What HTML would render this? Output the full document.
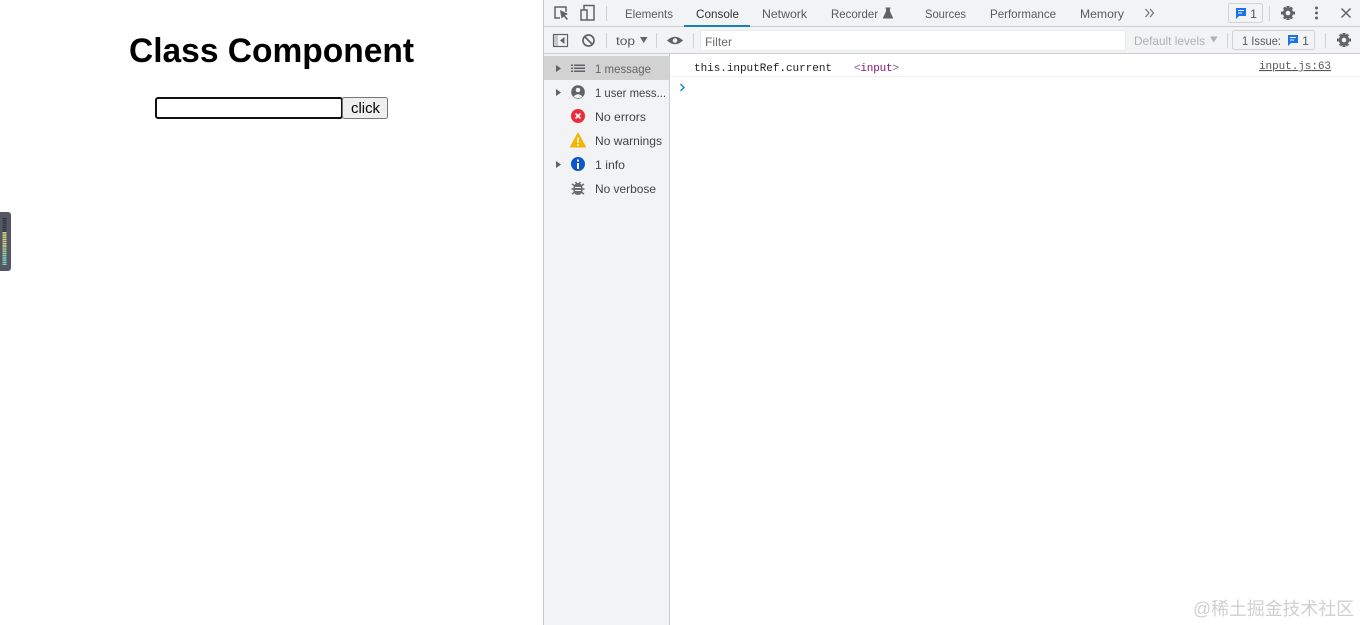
<!DOCTYPE html>
<html><head><meta charset="utf-8"><style>
html,body{margin:0;padding:0;background:#fff;width:1360px;height:625px;overflow:hidden}
svg{display:block}
text{font-family:"Liberation Sans","Noto Sans CJK SC",sans-serif;font-size:12px;fill:#5a5a5a}
.m{font-family:"Liberation Mono",monospace;font-size:11px}
</style></head><body>
<svg width="1360" height="625" viewBox="0 0 1360 625" xmlns="http://www.w3.org/2000/svg">
<!-- page -->
<text x="129" y="62" textLength="285" lengthAdjust="spacingAndGlyphs" style="font-size:34px;font-weight:bold;fill:#000">Class Component</text>
<rect x="156" y="98" width="186" height="20" rx="2" fill="#fff" stroke="#101010" stroke-width="2"/>
<rect x="342.500" y="97.500" width="45" height="21" rx="2" fill="#efefef" stroke="#767676"/>
<text x="351" y="113" textLength="29" lengthAdjust="spacingAndGlyphs" style="font-size:15px;fill:#000">click</text>
<!-- side widget -->
<rect x="-4" y="212" width="15" height="59" rx="3" fill="#555766"/>
<path d="M4.500 218V232" stroke="#2c2d34" stroke-width="4" stroke-dasharray="1.200 1"/>
<path d="M4.500 232V246" stroke="#d6d87a" stroke-width="4" stroke-dasharray="1.500 .7"/>
<path d="M4.500 246V255" stroke="#a8d48c" stroke-width="4" stroke-dasharray="1.500 .7"/>
<path d="M4.500 255V265" stroke="#79d6b4" stroke-width="4" stroke-dasharray="1.500 .7"/>
<!-- devtools -->
<rect x="543" y="0" width="817" height="625" fill="#fff"/>
<rect x="543" y="0" width="1" height="625" fill="#c8c8c8"/>
<rect x="544" y="0" width="816" height="53" fill="#f1f3f4"/>
<rect x="544" y="26" width="816" height="1" fill="#cbcdd0"/>
<rect x="544" y="53" width="816" height="1" fill="#cbcdd0"/>
<rect x="544" y="54" width="125" height="571" fill="#f1f3f4"/>
<rect x="669" y="54" width="1" height="571" fill="#cbcdd0"/>
<rect x="544" y="56" width="125" height="24" fill="#d2d2d2"/>
<rect x="670" y="76" width="690" height="1" fill="#f0f0f0"/>
<!-- tab bar icons -->
<g fill="none" stroke="#5f6368" stroke-width="1.500">
<path d="M560 18H555V7H566V12"/>
<rect x="581" y="10" width="6" height="10"/>
<path d="M584 10V5.500H594V20H587"/>
</g>
<path d="M560 10L568 14L565 15.500L568 19L566.500 20L564 16.500L561.500 18.500Z" fill="#5f6368"/>
<rect x="606" y="6" width="1" height="15" fill="#cfd1d4"/>
<text x="625" y="18" textLength="48" lengthAdjust="spacingAndGlyphs">Elements</text>
<text x="696" y="18" textLength="43" lengthAdjust="spacingAndGlyphs" style="fill:#333">Console</text>
<rect x="684" y="25" width="66" height="2" fill="#1a7fb8"/>
<text x="762" y="18" textLength="45" lengthAdjust="spacingAndGlyphs">Network</text>
<text x="831" y="18" textLength="47" lengthAdjust="spacingAndGlyphs">Recorder</text>
<path d="M885.500 8H890.500M886.500 8V11.500L883.500 18H892.500L889.500 11.500V8Z" fill="#5f6368" stroke="#5f6368"/>
<text x="925" y="18" textLength="41" lengthAdjust="spacingAndGlyphs">Sources</text>
<text x="990" y="18" textLength="66" lengthAdjust="spacingAndGlyphs">Performance</text>
<text x="1080" y="18" textLength="44" lengthAdjust="spacingAndGlyphs">Memory</text>
<path d="M1145.500 9L1149 13L1145.500 17M1150 9L1153.500 13L1150 17" fill="none" stroke="#6e7276" stroke-width="1.200"/>
<rect x="1228.500" y="3.500" width="34" height="19" rx="2" fill="#f1f3f4" stroke="#cfd1d4"/>
<path d="M1236 8H1246V16H1239L1236 19Z" fill="#1a73e8"/>
<path d="M1238 10.500H1244M1238 13H1242" stroke="#fff"/>
<text x="1250" y="18" textLength="7" lengthAdjust="spacingAndGlyphs">1</text>
<rect x="1269" y="6" width="1" height="15" fill="#cfd1d4"/>
<!-- gear 1 -->
<g fill="#5f6368">
<circle cx="1288" cy="13" r="5.200"/>
<path d="M1286.500 6H1289.500V20H1286.500ZM1281 11.500H1295V14.500H1281ZM1283 8.200L1285.200 6.500L1293 17.800L1290.800 19.500ZM1293 8.200L1290.800 6.500L1283 17.800L1285.200 19.500Z"/>
<circle cx="1316.500" cy="8" r="1.500"/><circle cx="1316.500" cy="13" r="1.500"/><circle cx="1316.500" cy="18" r="1.500"/>
</g>
<circle cx="1288" cy="13" r="2.300" fill="#f1f3f4"/>
<path d="M1341.500 8.500L1350.500 17.500M1350.500 8.500L1341.500 17.500" stroke="#5f6368" stroke-width="1.500"/>
<!-- second toolbar -->
<rect x="553.500" y="34.500" width="14" height="12" fill="none" stroke="#5f6368" stroke-width="1.200"/>
<rect x="554" y="35" width="4" height="11" fill="#c4c7ca"/>
<path d="M564.500 37V44L560 40.500Z" fill="#5f6368"/>
<circle cx="588.500" cy="40.500" r="5.500" fill="none" stroke="#5f6368" stroke-width="1.700"/>
<path d="M584.500 36.500L592.500 44.500" stroke="#5f6368" stroke-width="1.700"/>
<rect x="606" y="33" width="1" height="15" fill="#cfd1d4"/>
<text x="616" y="45" textLength="19" lengthAdjust="spacingAndGlyphs">top</text>
<path d="M640 37H647.500L643.750 43Z" fill="#5f6368"/>
<rect x="656" y="33" width="1" height="15" fill="#cfd1d4"/>
<path d="M667 40.500Q675 33 683 40.500Q675 48 667 40.500Z" fill="#5f6368"/>
<circle cx="675" cy="40.500" r="2.300" fill="#f1f3f4"/>
<rect x="693" y="33" width="1" height="15" fill="#cfd1d4"/>
<rect x="700.500" y="30.500" width="425" height="20" rx="1" fill="#fff" stroke="#e8eaed"/>
<text x="705" y="46" textLength="27" lengthAdjust="spacingAndGlyphs" style="fill:#6a6a6a">Filter</text>
<text x="1134" y="45" textLength="71" lengthAdjust="spacingAndGlyphs" style="fill:#aeb0b3">Default levels</text>
<path d="M1210 36.500H1217.500L1213.750 42.500Z" fill="#aeb0b3"/>
<rect x="1227" y="33" width="1" height="15" fill="#cfd1d4"/>
<rect x="1232.500" y="30.500" width="82" height="19" rx="2" fill="#f1f3f4" stroke="#cfd1d4"/>
<text x="1242" y="45" textLength="39" lengthAdjust="spacingAndGlyphs">1 Issue:</text>
<path d="M1288 35H1298V43H1291L1288 46Z" fill="#1a73e8"/>
<path d="M1290 37.500H1296M1290 40H1294" stroke="#fff"/>
<text x="1302" y="45" textLength="7" lengthAdjust="spacingAndGlyphs">1</text>
<rect x="1325" y="33" width="1" height="15" fill="#cfd1d4"/>
<g fill="#5f6368">
<circle cx="1344" cy="40" r="5.200"/>
<path d="M1342.500 33H1345.500V47H1342.500ZM1337 38.500H1351V41.500H1337ZM1339 35.200L1341.200 33.500L1349 44.800L1346.800 46.500ZM1349 35.200L1346.800 33.500L1339 44.800L1341.200 46.500Z"/>
</g>
<circle cx="1344" cy="40" r="2.300" fill="#f1f3f4"/>
<!-- sidebar -->
<g fill="#5f6368">
<path d="M556 65L561 68.500L556 72Z"/>
<path d="M556 89L561 92.500L556 96Z"/>
<path d="M556 161L561 164.500L556 168Z"/>
<path d="M571 64.500H573V66H571ZM574 64.500H585V66H574ZM571 67.500H573V69H571ZM574 67.500H585V69H574ZM571 70.500H573V72H571ZM574 70.500H585V72H574Z"/>
<circle cx="578" cy="92" r="6.800"/>
</g>
<circle cx="578" cy="90" r="2.300" fill="#f1f3f4"/>
<path d="M573.500 96.500Q578 92 582.500 96.500L580 98H576Z" fill="#f1f3f4"/>
<text x="595" y="73" textLength="56" lengthAdjust="spacingAndGlyphs" style="fill:#666">1 message</text>
<text x="595" y="97" textLength="71" lengthAdjust="spacingAndGlyphs" style="fill:#444">1 user mess...</text>
<circle cx="578" cy="116" r="7" fill="#ee2a3c"/>
<path d="M575.500 113.500L580.500 118.500M580.500 113.500L575.500 118.500" stroke="#fff" stroke-width="1.600"/>
<text x="595" y="121" textLength="51" lengthAdjust="spacingAndGlyphs" style="fill:#444">No errors</text>
<path d="M578 133L585.500 147H570.500Z" fill="#f4b400" stroke="#f4b400" stroke-linejoin="round"/>
<path d="M578 137.500V143M578 144V146" stroke="#fff" stroke-width="1.500"/>
<text x="595" y="145" textLength="67" lengthAdjust="spacingAndGlyphs" style="fill:#444">No warnings</text>
<circle cx="578" cy="164" r="7" fill="#0b57c9"/>
<path d="M578 159.500V161.500M578 163V169" stroke="#fff" stroke-width="2"/>
<text x="595" y="169" textLength="30" lengthAdjust="spacingAndGlyphs" style="fill:#444">1 info</text>
<ellipse cx="578" cy="189" rx="4.800" ry="6" fill="#6a6d70"/>
<path d="M572 184L575 186M584 184L581 186M571.500 189H584.500M572 194L575 192M584 194L581 192M575.500 182L577 184M580.500 182L579 184" stroke="#6a6d70" stroke-width="1.500" fill="none"/>
<path d="M575 187.500H581M575 190.500H581" stroke="#f1f3f4"/>
<text x="595" y="193" textLength="61" lengthAdjust="spacingAndGlyphs" style="fill:#444">No verbose</text>
<!-- console -->
<text class="m" x="694" y="71" textLength="138" style="fill:#222">this.inputRef.current</text>
<text class="m" x="854" y="71" textLength="45"><tspan style="fill:#8a5c8c">&lt;</tspan><tspan style="fill:#881280">input</tspan><tspan style="fill:#8a5c8c">&gt;</tspan></text>
<text class="m" x="1259" y="69" textLength="72" style="fill:#555;text-decoration:underline">input.js:63</text>
<path d="M680.500 84L684 87.500L680.500 91" fill="none" stroke="#1a8fd8" stroke-width="1.500"/>
<!-- watermark -->
<text x="1193" y="615" textLength="161" lengthAdjust="spacingAndGlyphs" style="font-size:18px;fill:#d0d0d0;font-family:'Liberation Sans','Noto Sans CJK SC',sans-serif">@稀土掘金技术社区</text>
</svg>
</body></html>
